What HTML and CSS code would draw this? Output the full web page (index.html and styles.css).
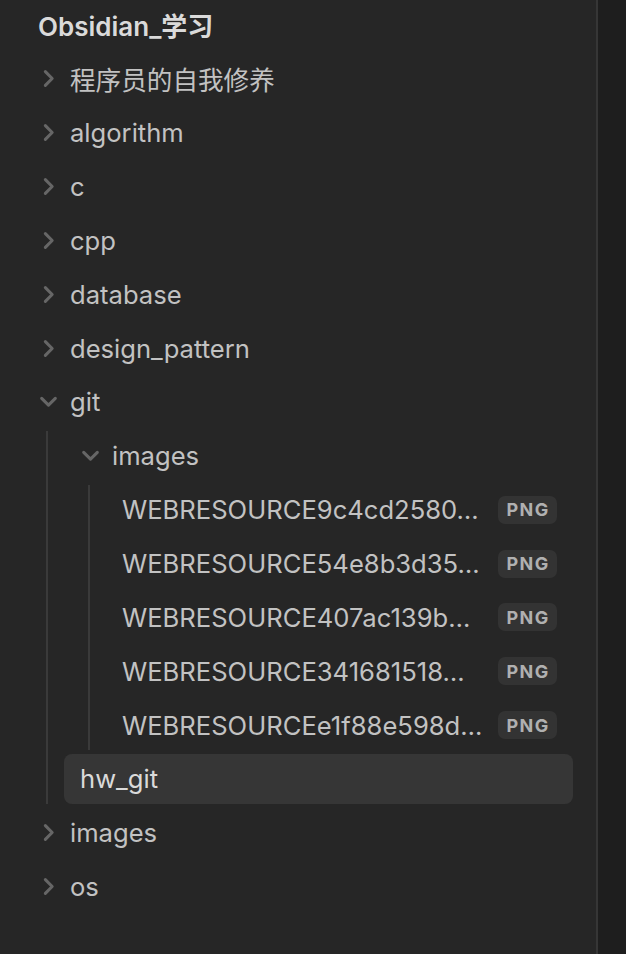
FILE: index.html
```html
<!DOCTYPE html>
<html lang="zh">
<head>
<meta charset="utf-8">
<link rel="stylesheet" href="styles.css">
</head>
<body>
<div class="app">
  <nav class="sidebar">
    <div class="tree">
      <div class="row title">Obsidian_学习</div>

      <div class="row folder"><span class="chev"><svg viewBox="0 0 20 20"><path d="M7 3.5 L13.5 10 L7 16.5"/></svg></span><span class="name">程序员的自我修养</span></div>
      <div class="row folder"><span class="chev"><svg viewBox="0 0 20 20"><path d="M7 3.5 L13.5 10 L7 16.5"/></svg></span><span class="name">algorithm</span></div>
      <div class="row folder"><span class="chev"><svg viewBox="0 0 20 20"><path d="M7 3.5 L13.5 10 L7 16.5"/></svg></span><span class="name">c</span></div>
      <div class="row folder"><span class="chev"><svg viewBox="0 0 20 20"><path d="M7 3.5 L13.5 10 L7 16.5"/></svg></span><span class="name">cpp</span></div>
      <div class="row folder"><span class="chev"><svg viewBox="0 0 20 20"><path d="M7 3.5 L13.5 10 L7 16.5"/></svg></span><span class="name">database</span></div>
      <div class="row folder"><span class="chev"><svg viewBox="0 0 20 20"><path d="M7 3.5 L13.5 10 L7 16.5"/></svg></span><span class="name">design_pattern</span></div>

      <div class="row folder"><span class="chev"><svg viewBox="0 0 20 20"><path d="M3.5 7 L10 13.5 L16.5 7"/></svg></span><span class="name">git</span></div>
      <div class="children">
        <div class="row folder"><span class="chev"><svg viewBox="0 0 20 20"><path d="M3.5 7 L10 13.5 L16.5 7"/></svg></span><span class="name">images</span></div>
        <div class="children">
          <div class="row file"><span class="name">WEBRESOURCE9c4cd2580…</span><span class="badge">PNG</span></div>
          <div class="row file"><span class="name">WEBRESOURCE54e8b3d35…</span><span class="badge">PNG</span></div>
          <div class="row file"><span class="name">WEBRESOURCE407ac139b…</span><span class="badge">PNG</span></div>
          <div class="row file"><span class="name">WEBRESOURCE341681518…</span><span class="badge">PNG</span></div>
          <div class="row file"><span class="name">WEBRESOURCEe1f88e598d…</span><span class="badge">PNG</span></div>
        </div>
        <div class="row file active"><span class="name">hw_git</span></div>
      </div>

      <div class="row folder"><span class="chev"><svg viewBox="0 0 20 20"><path d="M7 3.5 L13.5 10 L7 16.5"/></svg></span><span class="name">images</span></div>
      <div class="row folder"><span class="chev"><svg viewBox="0 0 20 20"><path d="M7 3.5 L13.5 10 L7 16.5"/></svg></span><span class="name">os</span></div>
    </div>
  </nav>
  <div class="main"></div>
</div>
</body>
</html>
```

FILE: styles.css
```css
html, body {
  margin: 0;
  padding: 0;
  height: 100%;
  background: #1e1e1e;
}
body {
  font-family: Inter, "Noto Sans CJK SC", sans-serif;
}
.app {
  display: flex;
  height: 954px;
  width: 626px;
}
.sidebar {
  width: 596px;
  flex: none;
  background: #262626;
  border-right: 2px solid #363636;
  box-sizing: content-box;
  overflow: hidden;
}
.main {
  flex: 1;
  background: #1e1e1e;
}
.tree {
  display: flex;
  flex-direction: column;
  gap: 4px;
  padding: 0 23px 0 22px;
}
.children {
  display: flex;
  flex-direction: column;
  gap: 4px;
  margin-left: 24px;
  border-left: 2px solid #3a3a3a;
  padding-left: 16px;
}
.row {
  display: flex;
  align-items: center;
  height: 49.87px;
  box-sizing: border-box;
  border-radius: 8px;
  font-size: 25.6px;
  color: #c2c2c2;
  white-space: nowrap;
}
.row.title {
  padding-left: 16px;
  font-size: 26px;
  font-weight: 600;
  color: #dadada;
}
.row.folder {
  padding-left: 10px;
}
.row.file {
  padding: 0 16px;
}
.row.active {
  background: #363636;
  color: #dadada;
}
.chev {
  width: 32px;
  height: 32px;
  flex: none;
  display: flex;
  align-items: center;
  justify-content: center;
  margin-right: 6px;
}
.chev svg {
  width: 21px;
  height: 21px;
  fill: none;
  stroke: #666666;
  stroke-width: 2.9;
  stroke-linecap: round;
  stroke-linejoin: round;
}
.name {
  flex: 1;
}
.badge {
  flex: none;
  margin-left: 8px;
  width: 59px;
  height: 28px;
  border-radius: 7px;
  background: #333333;
  color: #b0b0b0;
  font-size: 18px;
  font-weight: 700;
  letter-spacing: 1.4px;
  display: flex;
  align-items: center;
  justify-content: center;
  box-sizing: border-box;
  padding-left: 1px;
}
```
